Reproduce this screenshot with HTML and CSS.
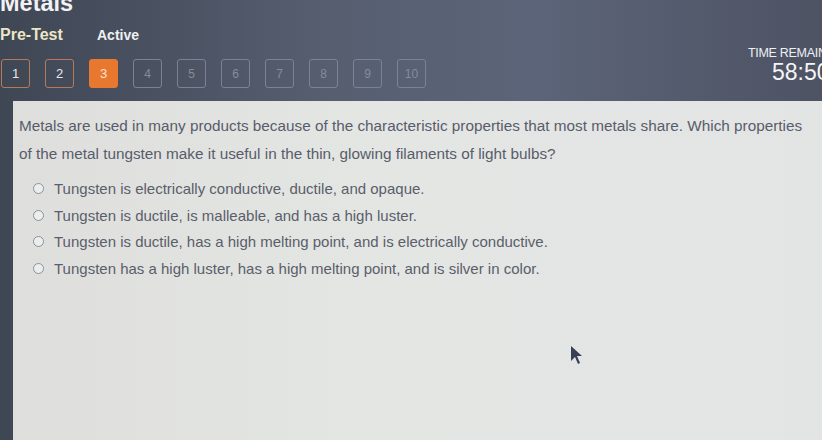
FILE: index.html
```html
<!DOCTYPE html>
<html>
<head>
<meta charset="utf-8">
<link rel="stylesheet" href="styles.css">
</head>
<body>
<div class="page">
  <header class="top">
    <div class="title">Metals</div>
    <div class="tabs">
      <span class="tab-pre">Pre-Test</span>
      <span class="tab-active">Active</span>
    </div>
    <div class="navrow">
      <div class="nums">
        <span class="num done">1</span>
        <span class="num done">2</span>
        <span class="num current">3</span>
        <span class="num">4</span>
        <span class="num">5</span>
        <span class="num">6</span>
        <span class="num">7</span>
        <span class="num">8</span>
        <span class="num">9</span>
        <span class="num">10</span>
      </div>
      <div class="timer">
        <div class="timer-label">TIME REMAINING</div>
        <div class="timer-value">58:50</div>
      </div>
    </div>
  </header>
  <main class="panel">
    <p class="question">Metals are used in many products because of the characteristic properties that most metals share. Which properties of the metal tungsten make it useful in the thin, glowing filaments of light bulbs?</p>
    <ul class="options">
      <li class="opt"><span class="radio"></span>Tungsten is electrically conductive, ductile, and opaque.</li>
      <li class="opt"><span class="radio"></span>Tungsten is ductile, is malleable, and has a high luster.</li>
      <li class="opt"><span class="radio"></span>Tungsten is ductile, has a high melting point, and is electrically conductive.</li>
      <li class="opt"><span class="radio"></span>Tungsten has a high luster, has a high melting point, and is silver in color.</li>
    </ul>
    <svg class="cursor" width="14" height="20" viewBox="0 0 14 20"><path d="M1 1 L1 16 L5 12 L8 19 L10 18 L7 11 L12 11 Z" fill="#3a3f58"/></svg>
  </main>
</div>
</body>
</html>
```
FILE: styles.css
```css
html, body {
  margin: 0;
  padding: 0;
  width: 822px;
  height: 440px;
  overflow: hidden;
  background: #4a5060;
  font-family: "Liberation Sans", Arial, sans-serif;
}
.page {
  width: 822px;
  height: 440px;
  display: flex;
  flex-direction: column;
  background: linear-gradient(90deg, #3f4654 0%, #565e70 40%, #5c6479 65%, #4d5363 100%);
}
.top {
  height: 101px;
  flex: none;
  position: relative;
  overflow: hidden;
}
.title {
  color: #f2f2f4;
  font-weight: bold;
  font-size: 23.5px;
  line-height: 22px;
  margin-top: -8px;
}
.tabs {
  display: flex;
  align-items: baseline;
  margin-top: 12px;
  height: 18px;
}
.tab-pre {
  color: #ece5c6;
  font-weight: bold;
  font-size: 16px;
  width: 97px;
}
.tab-active {
  color: #f0f0f2;
  font-weight: bold;
  font-size: 14px;
}
.navrow {
  display: flex;
  justify-content: space-between;
  align-items: flex-start;
  margin-top: 2px;
}
.nums {
  display: flex;
  gap: 15px;
  padding-left: 1px;
  margin-top: 13px;
}
.num {
  box-sizing: border-box;
  width: 29px;
  height: 29px;
  border: 1.5px solid #7b8294;
  border-radius: 3px;
  display: flex;
  align-items: center;
  justify-content: center;
  color: #868c9c;
  font-size: 12px;
}
.num.done {
  border-color: #b8795a;
  color: #e8e8ec;
  font-size: 13px;
}
.num.current {
  background: #e8782f;
  border-color: #e8782f;
  color: #fbe4d0;
  font-size: 13px;
}
.timer {
  width: 74px;
  white-space: nowrap;
  overflow: hidden;
  text-align: left;
}
.timer-label {
  color: #eef0f4;
  font-size: 12.5px;
  letter-spacing: -0.3px;
  line-height: 14px;
}
.timer-value {
  color: #f4f4f6;
  font-size: 23px;
  line-height: 24px;
  padding-left: 24px;
}
.panel {
  flex: 1;
  margin-left: 13px;
  background: linear-gradient(90deg, #dedfdc 0%, #e4e6e4 45%, #e2e5e4 100%);
  position: relative;
  padding: 11px 0 0 6px;
}
.question {
  margin: 0;
  color: #585c6a;
  font-size: 15.3px;
  line-height: 28px;
  width: 796px;
}
.options {
  list-style: none;
  margin: 7px 0 0 0;
  padding: 0 0 0 14px;
}
.opt {
  display: flex;
  align-items: center;
  gap: 10px;
  color: #5a5e6a;
  font-size: 15px;
  height: 26.7px;
}
.radio {
  box-sizing: border-box;
  width: 11px;
  height: 11px;
  border: 1.3px solid #8c909a;
  border-radius: 50%;
  background: #eceeee;
}
.cursor {
  position: absolute;
  left: 557px;
  top: 244px;
}
```
